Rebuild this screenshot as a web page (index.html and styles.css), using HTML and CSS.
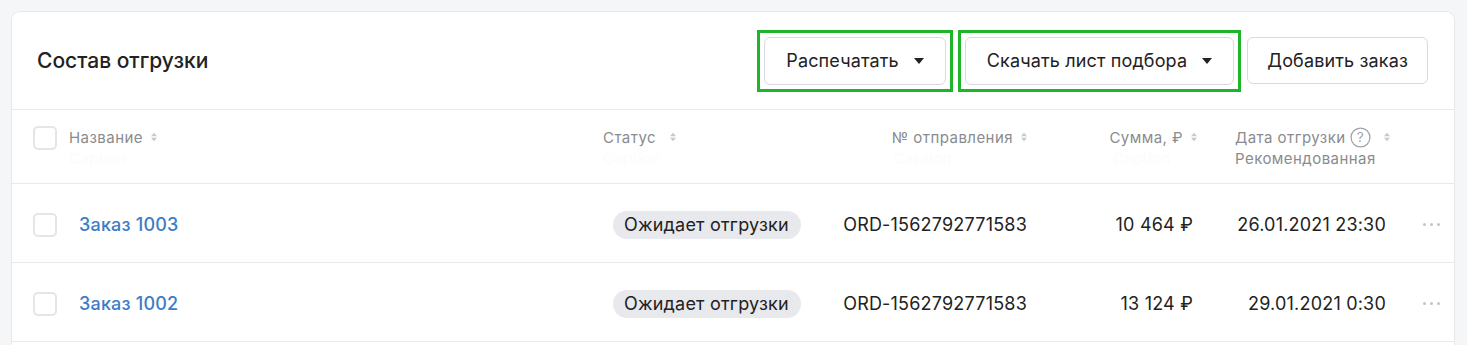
FILE: index.html
```html
<!DOCTYPE html>
<html lang="ru">
<head>
    <meta charset="UTF-8">
    <meta name="viewport" content="width=device-width, initial-scale=1.0">
    <title>Состав отгрузки</title>
    <link rel="stylesheet" href="styles.css">
</head>
<body>
    <div class="card">
        <div class="card-header">
            <h2 class="card-title">Состав отгрузки</h2>
            <div class="actions">
                <div class="highlight">
                    <button class="btn">Распечатать <span class="caret"></span></button>
                </div>
                <div class="highlight">
                    <button class="btn">Скачать лист подбора <span class="caret"></span></button>
                </div>
                <button class="btn btn-plain">Добавить заказ</button>
            </div>
        </div>

        <div class="table">
            <div class="table-row table-head">
                <div class="cell"><span class="checkbox"></span></div>
                <div class="cell col-name">
                    <div class="th">Название <svg class="sort" viewBox="0 0 7 10"><path d="M0 4L3.5 0L7 4Z M0 6L3.5 10L7 6Z"/></svg></div>
                    <div class="caption">Caption</div>
                </div>
                <div class="cell col-status">
                    <div class="th th-wide">Статус <svg class="sort" viewBox="0 0 7 10"><path d="M0 4L3.5 0L7 4Z M0 6L3.5 10L7 6Z"/></svg></div>
                    <div class="caption">Caption</div>
                </div>
                <div class="cell col-num">
                    <div class="th">№ отправления <svg class="sort" viewBox="0 0 7 10"><path d="M0 4L3.5 0L7 4Z M0 6L3.5 10L7 6Z"/></svg></div>
                    <div class="caption caption-num">Caption</div>
                </div>
                <div class="cell col-sum">
                    <div class="th">Сумма, ₽ <svg class="sort" viewBox="0 0 7 10"><path d="M0 4L3.5 0L7 4Z M0 6L3.5 10L7 6Z"/></svg></div>
                    <div class="caption caption-sum">Caption</div>
                </div>
                <div class="cell col-date">
                    <div class="th"><span class="th-text">Дата отгрузки</span>
                        <svg class="help" viewBox="0 0 20 20"><circle cx="10" cy="10" r="9" fill="none" stroke="currentColor" stroke-width="1.2"/><text x="10" y="14.5" text-anchor="middle" font-size="13" fill="currentColor" font-family="Inter, sans-serif">?</text></svg>
                        <svg class="sort sort-date" viewBox="0 0 7 10"><path d="M0 4L3.5 0L7 4Z M0 6L3.5 10L7 6Z"/></svg>
                    </div>
                    <div class="subcaption">Рекомендованная</div>
                </div>
                <div class="cell"></div>
            </div>

            <div class="table-row">
                <div class="cell"><span class="checkbox"></span></div>
                <div class="cell col-name"><a class="order-link" href="#">Заказ 1003</a></div>
                <div class="cell col-status"><span class="badge">Ожидает отгрузки</span></div>
                <div class="cell col-num">ORD-1562792771583</div>
                <div class="cell col-sum">10 464 ₽</div>
                <div class="cell col-date">26.01.2021 23:30</div>
                <div class="cell col-more"><span class="dots"><i></i><i></i><i></i></span></div>
            </div>

            <div class="table-row">
                <div class="cell"><span class="checkbox"></span></div>
                <div class="cell col-name"><a class="order-link" href="#">Заказ 1002</a></div>
                <div class="cell col-status"><span class="badge">Ожидает отгрузки</span></div>
                <div class="cell col-num">ORD-1562792771583</div>
                <div class="cell col-sum">13 124 ₽</div>
                <div class="cell col-date">29.01.2021 0:30</div>
                <div class="cell col-more"><span class="dots"><i></i><i></i><i></i></span></div>
            </div>
        </div>
    </div>
</body>
</html>
```

FILE: styles.css
```css
body {
    margin: 0;
    padding: 11px 12px 0 11px;
    background-color: #f5f6f8;
    font-family: Inter, "Noto Sans", sans-serif;
    color: #222;
}
.card {
    background: white;
    border: 1px solid #e6e8eb;
    border-bottom: none;
    border-radius: 9px 9px 0 0;
    height: 340px;
}
.card-header {
    display: flex;
    align-items: center;
    justify-content: space-between;
    height: 97px;
    padding: 0 26px 0 25px;
    border-bottom: 1px solid #e8e9ec;
}
.card-title {
    margin: 0;
    font-size: 21px;
    font-weight: 500;
    color: #222;
}
.actions {
    display: flex;
    align-items: center;
    gap: 5px;
}
.highlight {
    padding: 4px;
    border: 3px solid #1fb52b;
}
.actions .btn-plain {
    margin-left: 1px;
}
.btn {
    display: flex;
    align-items: center;
    gap: 15px;
    height: 48px;
    padding: 0 21px;
    background: white;
    border: 1px solid #d9dadd;
    border-radius: 6px;
    font-family: inherit;
    font-size: 18px;
    letter-spacing: 0.15px;
    color: #222;
    cursor: pointer;
}
.btn-plain {
    padding: 0 19px;
    height: 47px;
}
.caret {
    width: 0;
    height: 0;
    border-left: 5px solid transparent;
    border-right: 5px solid transparent;
    border-top: 6px solid #222;
}
.table-row {
    display: grid;
    grid-template-columns: 24px 533px 240px 200px 167px 195px 1fr;
    align-items: center;
    box-sizing: border-box;
    height: 79px;
    padding: 3px 0 0 21px;
    border-bottom: 1px solid #e8e9ec;
    font-size: 18px;
    letter-spacing: 0.2px;
}
.table-head {
    height: 74px;
    padding-top: 0;
    align-items: start;
    font-size: 15px;
    letter-spacing: 0.45px;
}
.table-head .cell {
    padding-top: 17px;
}
.table-head .cell:first-child {
    padding-top: 16px;
}
.checkbox {
    display: block;
    width: 20px;
    height: 20px;
    border: 2px solid #e4e5e7;
    border-radius: 5px;
}
.th {
    display: flex;
    align-items: center;
    gap: 8px;
    height: 20px;
    white-space: nowrap;
    color: #8a8b8e;
}
.th-wide {
    gap: 14px;
}
.th-text {
    flex-shrink: 0;
}
.sort {
    flex-shrink: 0;
    width: 6px;
    height: 10px;
    fill: #c6c8cc;
}
.sort-date {
    margin-left: 5px;
}
.help {
    flex-shrink: 0;
    width: 21px;
    height: 21px;
    margin-left: -4px;
    color: #a3a4a8;
}
.caption {
    margin-top: 2px;
    color: #fcfcfc;
    line-height: 20px;
}
.subcaption {
    margin-top: 2px;
    color: #8a8b8e;
    line-height: 20px;
    white-space: nowrap;
}
.table-head .col-name {
    padding-left: 12px;
}
.table-head .col-status {
    padding-left: 13px;
}
.table-head .col-num,
.table-head .col-sum {
    text-align: left;
}
.table-head .col-num .th,
.table-head .col-sum .th {
    justify-content: flex-end;
}
.table-head .col-sum .th {
    margin-right: -4px;
}
.caption-num {
    padding-left: 64px;
}
.caption-sum {
    padding-left: 83px;
}
.table-head .col-date {
    text-align: left;
    padding-left: 38px;
    padding-right: 0;
}
.col-name {
    padding-left: 22px;
}
.order-link {
    color: #3d7cc7;
    font-weight: 500;
    text-decoration: none;
}
.col-status {
    padding-left: 23px;
}
.badge {
    display: inline-block;
    height: 28px;
    line-height: 28px;
    padding: 0 12px 0 11px;
    background: #e8e9ed;
    border-radius: 14px;
}
.col-num {
    text-align: right;
    padding-right: 3px;
}
.col-sum {
    text-align: right;
    padding-right: 4px;
}
.col-date {
    text-align: right;
    padding-right: 6px;
}
.col-more {
    padding-left: 31px;
}
.dots {
    display: flex;
    gap: 4px;
}
.dots i {
    width: 3px;
    height: 3px;
    border-radius: 50%;
    background: #c2c4c8;
}
```
